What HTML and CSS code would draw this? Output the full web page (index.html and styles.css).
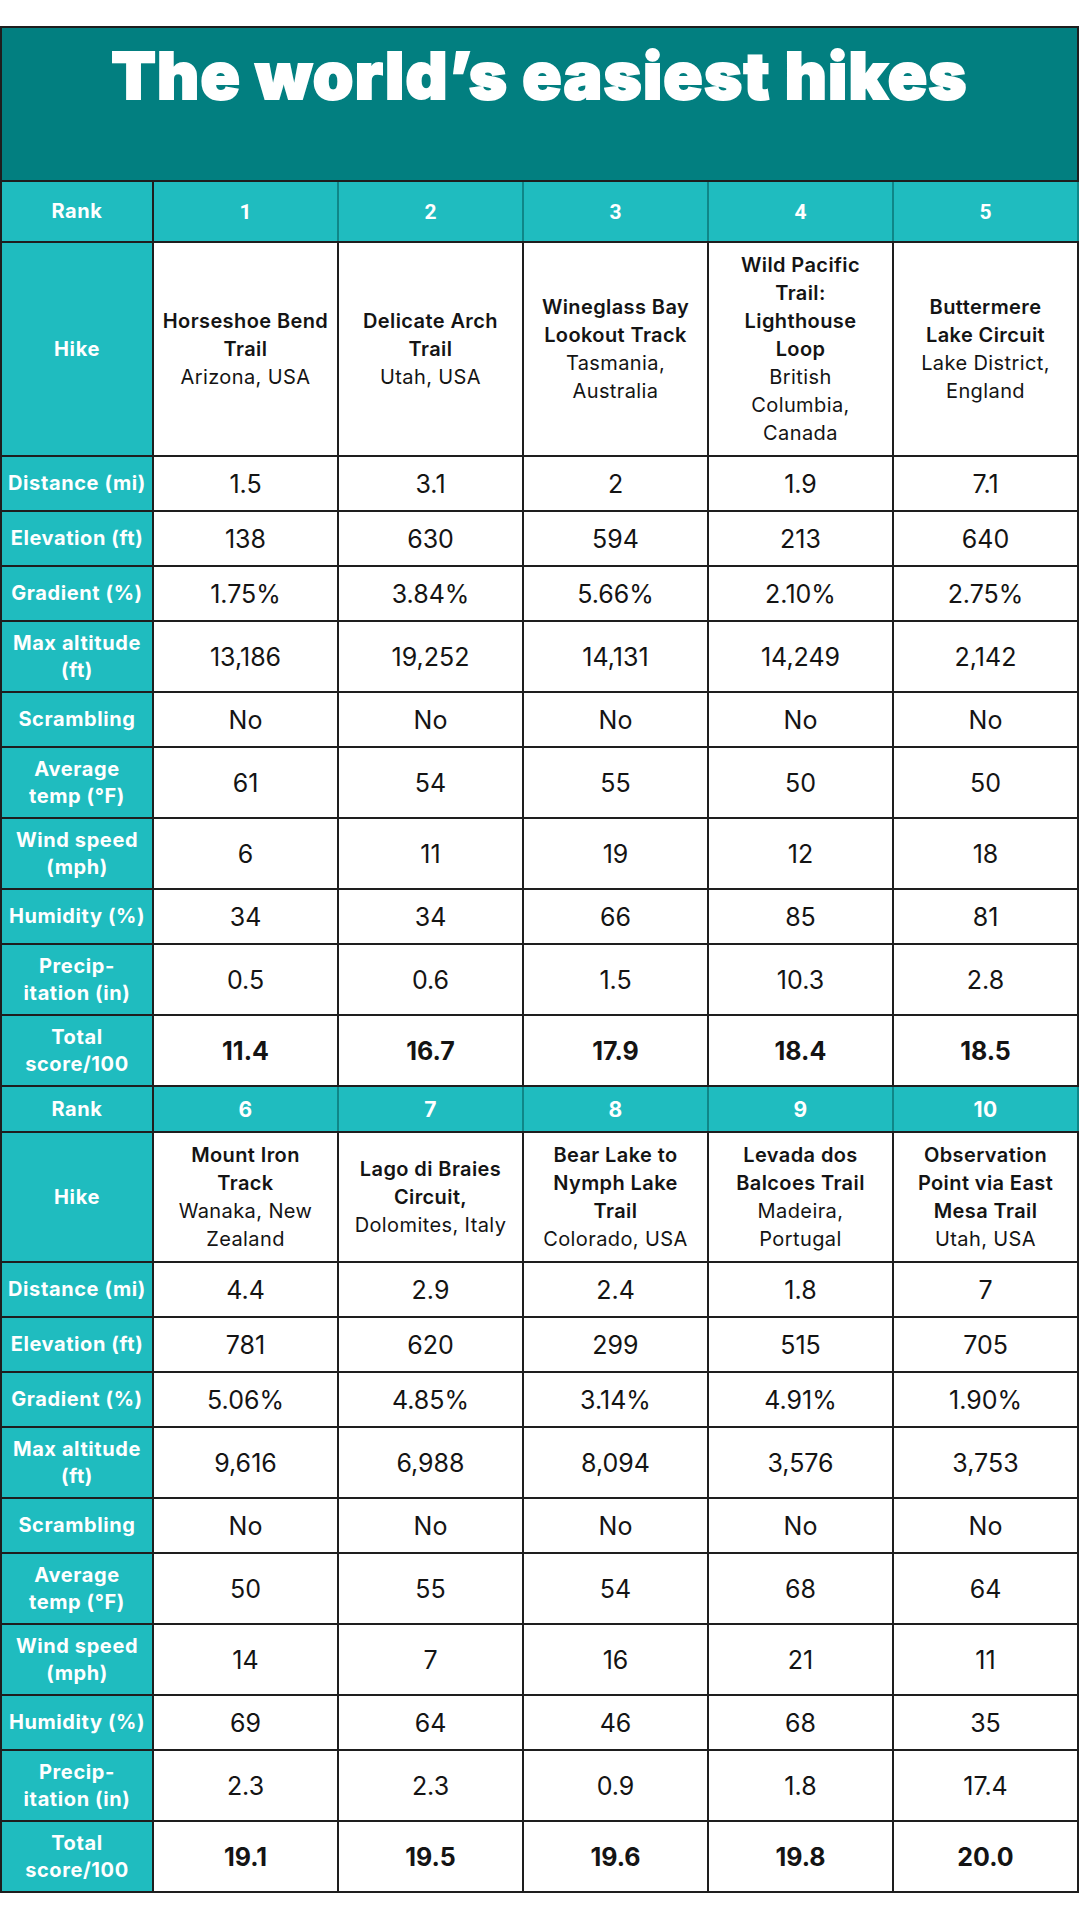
FILE: index.html
```html
<!DOCTYPE html>
<html lang="en">
<head>
<meta charset="utf-8">
<title>The world’s easiest hikes</title>
<link rel="stylesheet" href="styles.css">
</head>
<body>
<div class="page">
<table class="hikes">
  <colgroup>
    <col class="c-label"><col class="c-data"><col class="c-data"><col class="c-data"><col class="c-data"><col class="c-data">
  </colgroup>
  <tr class="title-row"><th colspan="6"><h1 class="title">The world’s easiest hikes</h1></th></tr>

  <tr class="rank-row rank-a"><th class="label">Rank</th><td class="rank alt">1</td><td class="rank alt">2</td><td class="rank alt">3</td><td class="rank alt">4</td><td class="rank alt">5</td></tr>
  <tr class="hike-row hike-a"><th class="label">Hike</th>
    <td><span class="name">Horseshoe Bend<br>Trail</span><br><span class="loc">Arizona, USA</span></td>
    <td><span class="name">Delicate Arch<br>Trail</span><br><span class="loc">Utah, USA</span></td>
    <td><span class="name">Wineglass Bay<br>Lookout Track</span><br><span class="loc">Tasmania,<br>Australia</span></td>
    <td><span class="name">Wild Pacific<br>Trail:<br>Lighthouse<br>Loop</span><br><span class="loc">British<br>Columbia,<br>Canada</span></td>
    <td><span class="name">Buttermere<br>Lake Circuit</span><br><span class="loc">Lake District,<br>England</span></td>
  </tr>
  <tr class="one"><th class="label">Distance (mi)</th><td>1.5</td><td>3.1</td><td>2</td><td>1.9</td><td>7.1</td></tr>
  <tr class="one"><th class="label">Elevation (ft)</th><td>138</td><td>630</td><td>594</td><td>213</td><td>640</td></tr>
  <tr class="one"><th class="label">Gradient (%)</th><td>1.75%</td><td>3.84%</td><td>5.66%</td><td>2.10%</td><td>2.75%</td></tr>
  <tr class="two"><th class="label">Max altitude<br>(ft)</th><td>13,186</td><td>19,252</td><td>14,131</td><td>14,249</td><td>2,142</td></tr>
  <tr class="one"><th class="label">Scrambling</th><td>No</td><td>No</td><td>No</td><td>No</td><td>No</td></tr>
  <tr class="two"><th class="label">Average<br>temp (°F)</th><td>61</td><td>54</td><td>55</td><td>50</td><td>50</td></tr>
  <tr class="two"><th class="label">Wind speed<br>(mph)</th><td>6</td><td>11</td><td>19</td><td>12</td><td>18</td></tr>
  <tr class="one"><th class="label">Humidity (%)</th><td>34</td><td>34</td><td>66</td><td>85</td><td>81</td></tr>
  <tr class="two"><th class="label">Precip-<br>itation (in)</th><td>0.5</td><td>0.6</td><td>1.5</td><td>10.3</td><td>2.8</td></tr>
  <tr class="two total"><th class="label">Total<br>score/100</th><td>11.4</td><td>16.7</td><td>17.9</td><td>18.4</td><td>18.5</td></tr>

  <tr class="rank-row rank-b"><th class="label">Rank</th><td class="rank">6</td><td class="rank">7</td><td class="rank">8</td><td class="rank">9</td><td class="rank">10</td></tr>
  <tr class="hike-row hike-b"><th class="label">Hike</th>
    <td><span class="name">Mount Iron<br>Track</span><br><span class="loc">Wanaka, New<br>Zealand</span></td>
    <td><span class="name">Lago di Braies<br>Circuit,</span><br><span class="loc">Dolomites, Italy</span></td>
    <td><span class="name">Bear Lake to<br>Nymph Lake<br>Trail</span><br><span class="loc">Colorado, USA</span></td>
    <td><span class="name">Levada dos<br>Balcoes Trail</span><br><span class="loc">Madeira,<br>Portugal</span></td>
    <td><span class="name">Observation<br>Point via East<br>Mesa Trail</span><br><span class="loc">Utah, USA</span></td>
  </tr>
  <tr class="one"><th class="label">Distance (mi)</th><td>4.4</td><td>2.9</td><td>2.4</td><td>1.8</td><td>7</td></tr>
  <tr class="one"><th class="label">Elevation (ft)</th><td>781</td><td>620</td><td>299</td><td>515</td><td>705</td></tr>
  <tr class="one"><th class="label">Gradient (%)</th><td>5.06%</td><td>4.85%</td><td>3.14%</td><td>4.91%</td><td>1.90%</td></tr>
  <tr class="two"><th class="label">Max altitude<br>(ft)</th><td>9,616</td><td>6,988</td><td>8,094</td><td>3,576</td><td>3,753</td></tr>
  <tr class="one"><th class="label">Scrambling</th><td>No</td><td>No</td><td>No</td><td>No</td><td>No</td></tr>
  <tr class="two"><th class="label">Average<br>temp (°F)</th><td>50</td><td>55</td><td>54</td><td>68</td><td>64</td></tr>
  <tr class="two"><th class="label">Wind speed<br>(mph)</th><td>14</td><td>7</td><td>16</td><td>21</td><td>11</td></tr>
  <tr class="one"><th class="label">Humidity (%)</th><td>69</td><td>64</td><td>46</td><td>68</td><td>35</td></tr>
  <tr class="two"><th class="label">Precip-<br>itation (in)</th><td>2.3</td><td>2.3</td><td>0.9</td><td>1.8</td><td>17.4</td></tr>
  <tr class="two total"><th class="label">Total<br>score/100</th><td>19.1</td><td>19.5</td><td>19.6</td><td>19.8</td><td>20.0</td></tr>
</table>
</div>
</body>
</html>
```

FILE: styles.css
```css
* { box-sizing: border-box; }
html, body { margin: 0; padding: 0; background: #ffffff; }
body { font-family: Inter, "Noto Sans", "DejaVu Sans", sans-serif; color: #111111; }
.page { width: 1080px; padding-top: 26px; }

.hikes {
  width: 1079px;
  border-collapse: collapse;
  table-layout: fixed;
  border: 2px solid #1e1e1e;
}
.c-label { width: 152px; }

.hikes th, .hikes td {
  border: 2px solid #1e1e1e;
  text-align: center;
  vertical-align: middle;
  padding: 0 2px;
  white-space: nowrap;
}
.hikes td {
  background: #ffffff;
  font-size: 25px;
  font-weight: 400;
  color: #141414;
}

.title-row th {
  background: #027f80;
  height: 154px;
  vertical-align: top;
  padding: 0;
}
.title {
  margin: 0;
  padding-top: 15px;
  font-size: 65px;
  line-height: 1;
  font-weight: 900;
  color: #ffffff;
  letter-spacing: 1.2px;
  -webkit-text-stroke: 2px #ffffff;
}

.label {
  background: #1fbcbf;
  color: #ffffff;
  font-size: 20px;
  font-weight: 700;
  line-height: 27px;
  letter-spacing: 0.6px;
}

.rank-row th, .rank-row td { background: #1fbcbf; }
.rank-row td.rank {
  color: #ffffff;
  font-weight: 700;
  font-size: 21px;
  letter-spacing: 0.5px;
  border-left-color: #0f8688;
  border-right-color: #0f8688;
}
.rank-row td.alt { font-family: Roboto, "Liberation Sans", sans-serif; font-size: 21px; letter-spacing: 0; }
.rank-a th, .rank-a td { height: 61px; }
.rank-b th, .rank-b td { height: 46px; }

.hike-row td { font-size: 20px; line-height: 28px; letter-spacing: 0.4px; }
.hike-row .name { font-weight: 600; }
.hike-row .loc { font-weight: 400; }
.hike-a th, .hike-a td { height: 214px; }
.hike-b th, .hike-b td { height: 130px; }

.one th, .one td { height: 55px; }
.two th, .two td { height: 71px; }
.total td { font-weight: 700; }
```
